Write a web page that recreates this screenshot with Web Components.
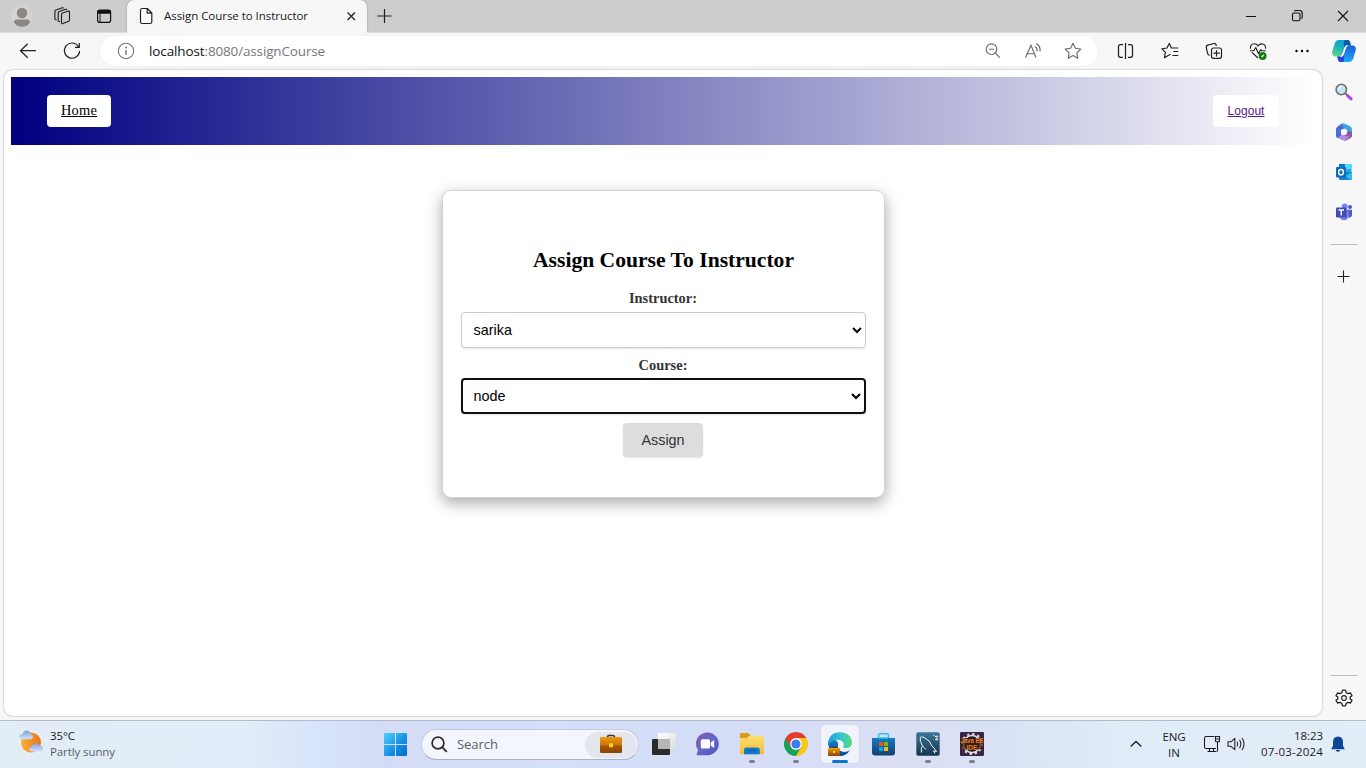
<!DOCTYPE html>
<html lang="en">
<head>
<meta charset="utf-8">
<title>Assign Course to Instructor</title>
<style>
html,body{margin:0;height:100%;overflow:hidden;background:#f7f7f7;font-family:"Open Sans","Noto Sans",sans-serif}
</style>
</head>
<body>
<desktop-screen></desktop-screen>
<script>
const ICONS = {
avatar:`<circle cx="12" cy="12" r="11" fill="#d5d3d0"/><circle cx="12" cy="9" r="5.200" fill="#8b8783"/><path d="M4 18.2Q4 15.5 6.5 15.5h11q2.500 0 2.500 2.700Q17.500 22.700 12 22.700T4 18.200Z" fill="#8b8783"/>`,
workspaces:`<g fill="none" stroke="#1b1b1b" stroke-width="1.100" stroke-linejoin="round"><path d="M11.500 10.500q0-1 1-1.400l6-2q1-.2 1 .8V16q0 .8-.8 1.200l-5.900 2.400q-1.300.4-1.300-1Z"/><path d="M10 17.500q-1.800.4-1.800-1.200V9q0-1 1-1.400l6.200-2.300q1.100-.3 1.400.8"/><path d="M6.700 15.700q-1.800.4-1.800-1.200V7.500q0-1 1-1.400l6.500-2.300q1-.3 1.300.5"/></g>`,
tabs:`<rect x="5.600" y="6.100" width="13" height="12.300" rx="2.200" fill="none" stroke="#111" stroke-width="1.200"/><path d="M5.600 9.800V8.100q0-2.200 2.200-2.200h8.600q2.200 0 2.200 2.200v1.700ZM8.500 9v9h-.9V9Z" fill="#111"/>`,
page:`<path d="M6.500 6.300q0-1.800 1.800-1.800h5l4.500 4.500v8.700q0 1.800-1.800 1.800H8.300q-1.800 0-1.800-1.800Zm6.700-1.700V9.200h4.600" fill="#fff" stroke="#222" stroke-width="1.200" stroke-linejoin="round"/>`,
x:`<path d="m8.500 8.500 7.500 7.500m0-7.500-7.500 7.500" stroke="#222" stroke-width="1.250"/>`,
plus:`<path d="M12.500 5v14M5.500 12h14" stroke="#222" stroke-width="1.200"/>`,
plusS:`<path d="M11.500 6.500v12M5.500 12.500h12" stroke="#222" stroke-width="1.100"/>`,
min:`<path d="M7 12.500h10" stroke="#111"/>`,
restore:`<g fill="none" stroke="#111" stroke-width="1.100"><rect x="7.500" y="9" width="7.500" height="7.800" rx="1.500"/><path d="M9.300 7.200q.3-.7 1.500-.7h3.700q2.700 0 2.700 2.700v3.800q0 1.200-.8 1.700"/></g>`,
close:`<path d="m7 7 10 10M17 7 7 17" stroke="#111" stroke-width="1.100"/>`,
back:`<path d="M20 11.700H4.500m7.200-7-7.200 7 7.200 7" fill="none" stroke="#222" stroke-width="1.200"/>`,
reload:`<path d="M18.600 7.800A7.600 7.600 0 1 0 19.600 12M19.300 4v4.300H15" fill="none" stroke="#222" stroke-width="1.200"/>`,
info:`<circle cx="12" cy="12" r="7.700" fill="none" stroke="#757575" stroke-width="1.100"/><path d="M12 11v5" stroke="#757575" stroke-width="1.400"/><circle cx="12" cy="8.500" r=".9" fill="#757575"/>`,
zoomout:`<g fill="none" stroke="#6b6b6b" stroke-width="1.150"><circle cx="10.500" cy="10.200" r="5.300"/><path d="m14.400 14.100 4.500 4.500M8 10.200h5"/></g>`,
read:`<g fill="none" stroke="#6b6b6b" stroke-width="1.150"><path d="M4.500 18.500 10 6.200l5 12.300M6.300 14.700h7.200M14 7.500q2.500 1.500 2 5M15.200 4.500q4.700 2.700 3.800 8"/></g>`,
star:`<path d="m12 4.300 2.400 4.900 5.400.8-3.900 3.800.9 5.400-4.800-2.600-4.800 2.600.9-5.400L4.200 10l5.400-.8Z" fill="none" stroke="#6b6b6b" stroke-width="1.150" stroke-linejoin="round"/>`,
split:`<g fill="none" stroke="#222" stroke-width="1.250"><path d="M9 5.700H6.500q-2 0-2 2v8.600q0 2 2 2H9M14 5.700h2.500q2 0 2 2v8.600q0 2-2 2H14M11.500 4v16"/></g>`,
favs:`<path d="M12.300 15.300 10.800 16 6.100 18.800l1-5.400L3.600 9.800l5-.8L11 4.500l2 4.500h7M15 12.500h5M14 16.500h6" transform="translate(.3 0)" fill="none" stroke="#222" stroke-width="1.200" stroke-linejoin="round"/>`,
collections:`<g fill="none" stroke="#222" stroke-width="1.200" stroke-linecap="round"><rect x="9.500" y="9" width="10" height="10.300" rx="2"/><path d="M14.500 11.500v5.500M11.800 14.200h5.500M7.300 16.200q-1.500-.5-1.800-2L4.300 8.700q-.4-2 1.500-2.500L12 4.500q1.700-.4 2.300 2"/></g>`,
health:`<g fill="none" stroke="#222" stroke-width="1.150" stroke-linejoin="round"><path d="M4.500 9.800q-.6-4.900 4-5 2 0 3.500 2 1.500-2 3.500-2 4.600.1 4 5M6 13.500l6 5.500M3.800 11.700h4l2-3.200 2.700 6.200 2.200-4.200 1 1.200h4"/></g><circle cx="16.600" cy="17" r="3.900" fill="#107c10"/><path d="m15.500 18.100 2.300-2.200" stroke="#bfe3bf" stroke-width="1.500"/>`,
dots:`<circle cx="6.500" cy="12" r="1.200"/><circle cx="12" cy="12" r="1.200"/><circle cx="17.500" cy="12" r="1.200"/>`,
copilot:`<defs><linearGradient id="c1" x1=".6" y1="0" x2=".3" y2="1"><stop offset="0" stop-color="#0a9fe0"/><stop offset=".5" stop-color="#20b2b5"/><stop offset="1" stop-color="#5fd48c"/></linearGradient><linearGradient id="c2" x1=".6" y1="0" x2=".3" y2="1"><stop offset="0" stop-color="#1a62dc"/><stop offset=".6" stop-color="#1f8df0"/><stop offset="1" stop-color="#12b8f4"/></linearGradient></defs><path d="M6.500 1h9q2 0 2.600 2.300l.8 3.200h-3.400q-1.800 0-2.500 2.200l-2.500 7.300q-.5 1.500-2 1.500H3.500Q-.3 17.500.2 12.500L3 3.700Q4 1 6.500 1Z" fill="url(#c1)"/><path d="M12.500 1h3q2 0 2.600 2.300l.8 3.200h-3.800q-1.800 0-2.500 2.200Q10.800 5 12.500 1Z" fill="#0d5b9f"/><path d="M17.500 23H8.700q-2 0-2.600-2.300l-.8-3.200h3.600q1.700 0 2.400-2.200l2.600-7.200q.6-1.600 2.100-1.600h4.500q3.800 0 3.300 4.500L21 20.300Q20 23 17.500 23Z" fill="url(#c2)"/><path d="M11.300 23H8.700q-2 0-2.600-2.300l-.8-3.200h3.600q1.700 0 2.400-2.200 1.900 3.700 0 7.700Z" fill="#2743d9"/><path d="M13 8.700q.7-2.200 2.500-2.200-1.200.2-1.700 1.700l-2.500 7.100q-.7 2.200-2.400 2.200H8.500q1.500 0 2-1.500Z" fill="#fff" stroke="#fff" stroke-width="1.100"/>`,
search:`<path d="m15.500 15.500 3.600 3.300" stroke="#b93fe8" stroke-width="3" stroke-linecap="round"/><path d="m13.200 13.300 1.800 1.700" stroke="#696969" stroke-width="1.800"/><circle cx="9.300" cy="9.500" r="5.200" fill="#c4e4f7" stroke="#717171" stroke-width="1.600"/><path d="M6.700 9q.5-2.300 2.700-2.500" stroke="#fff" stroke-width="1.200" fill="none"/>`,
m365:`<path d="M9.500 3.800q1.300-.8 2.700-.3l6.300 3.100q1.500.9 1.500 2.800v6.100l-5.200-1.800v-3.500L8 7.500Z" fill="#38a7e8"/><path d="m14.800 10.200 5.200 2v3.500q0 1.500-1.300 2.300l-5.500 3-3.200-5Z" fill="#8a58ad"/><path d="m4.500 16.500 5-1.500 2.500.8 6 .8-4.700 3.600q-1.300.7-2.600 0L5 17.700Z" fill="#b48ae0"/><path d="M9.500 3.800 5.300 6.700Q4 7.700 4 9.300V16q.3 1.500 1.500 1.900l4-2.600-.8-5L12 8.300Z" fill="#4c6bd6"/><path d="M9.500 10.300 12.500 8.500 15.500 10.500 14.500 14.500 11.500 15.500 9.300 13.800Z" fill="#f7f7f7"/>`,
outlook:`<rect x="7" y="4" width="12.500" height="12" rx="1" fill="#28a8ea"/><path d="M13 4h6.500v5H13Z" fill="#50d9ff"/><path d="M7 4h6v5H7Z" fill="#0078d4"/><path d="M7 12h13v7q0 1-1 1H8q-1 0-1-1Z" fill="#1683cf"/><path d="m20 12-7 4.200 6 3.800q1 0 1-1Z" fill="#31bced"/><rect x="4" y="7" width="10" height="10.500" rx="1" fill="#0f6cbd"/><ellipse cx="9" cy="12.200" rx="2.400" ry="2.700" fill="none" stroke="#fff" stroke-width="1.400"/>`,
teams:`<circle cx="12.700" cy="6.300" r="2.900" fill="#7b83eb"/><circle cx="18" cy="7" r="2" fill="#5059c9"/><path d="M15.500 9.800H20v5q-.2 3-3.500 3Z" fill="#5059c9"/><path d="M8 9.500h8.700v6.300q-.5 4.500-4.700 4.500-4 0-4.500-4Z" fill="#7b83eb"/><rect x="4" y="7.500" width="10.500" height="10" rx="1" fill="#444bb3"/><path d="M6.500 10h5.500M9.250 10v5.500" stroke="#fff" stroke-width="1.400"/>`,
gear:`<g transform="translate(12 12)"><path d="M-1.500-7.800h3l.8 2.500 1.600.9 2.500-.6 1.600 2.700L6.200-.9V.9L8 2.300 6.400 5l-2.500-.6-1.600.9-.8 2.500h-3l-.8-2.500-1.600-.9L-6.400 5-8 2.300-6.200.9V-.9L-8-2.300-6.400-5l2.500.6 1.600-.9Z" fill="none" stroke="#222" stroke-width="1.300" stroke-linejoin="round"/><circle r="2.300" fill="none" stroke="#222" stroke-width="1.200"/></g>`,
weather:`<defs><linearGradient id="w1"><stop stop-color="#f9b233"/><stop offset="1" stop-color="#ee7216"/></linearGradient><linearGradient id="w2" x2="0" y2="1"><stop stop-color="#7f9fdc"/><stop offset="1" stop-color="#d2e1fa"/></linearGradient></defs><circle cx="12" cy="12.500" r="10" fill="url(#w1)"/><path d="M3.500 9.200Q0 9 .2 6.500T3.500 4Q4.500.5 7.500.5t4 3.200Q14 4.500 14 6.700t-2.500 2.500Z" fill="url(#w2)"/><path d="M12.500 21.500Q10 21.300 10 19T13 16.500q1-3.500 3.700-3.500 3 0 3.800 2.800 3.500.3 3.500 3T20.500 21.500Z" fill="url(#w2)"/>`,
windows:`<defs><linearGradient id="win" x1="0" y1="0" x2="24" y2="24" gradientUnits="userSpaceOnUse"><stop stop-color="#4fd0fb"/><stop offset=".6" stop-color="#118be0"/><stop offset="1" stop-color="#0067c5"/></linearGradient></defs><path d="M1 0H11V11H0V1q0-1 1-1ZM12 0h10q1 0 1 1v10H12ZM0 12h11v11H1q-1 0-1-1ZM12 12h11v10q0 1-1 1H12Z" fill="url(#win)"/>`,
mag:`<circle cx="11" cy="11" r="5.900" fill="none" stroke="#2c2c2c" stroke-width="1.700"/><path d="m15.300 15.300 4 4" stroke="#2c2c2c" stroke-width="1.900" stroke-linecap="round"/>`,
brief:`<defs><linearGradient id="bf" x2="0" y2="1"><stop stop-color="#ef9608"/><stop offset=".5" stop-color="#c9760a"/><stop offset=".55" stop-color="#a95808"/><stop offset="1" stop-color="#8b4208"/></linearGradient></defs><path d="M8.500 5.500Q8.500 3.500 10 3.500h4q1.500 0 1.500 2" fill="none" stroke="#3b3328" stroke-width="1.600"/><rect x="1" y="5" width="22" height="16" rx="1.200" fill="url(#bf)"/><rect x="10" y="11.200" width="4" height="4" rx=".5" fill="#ffd51e"/>`,
taskview:`<defs><linearGradient id="tv" x1="0" y1="0" x2="1" y2="1"><stop stop-color="#fff"/><stop offset="1" stop-color="#dcdcdc"/></linearGradient></defs><rect y="7" width="18" height="16" rx="1" fill="#2b2b29"/><rect x="6" y="1" width="17.800" height="16" rx="1" fill="url(#tv)"/><path d="M6 7h12v10H7q-1 0-1-1Z" fill="#b6b6b6"/>`,
chat:`<defs><linearGradient id="ch" x1="0" y1="0" x2="1" y2="1"><stop stop-color="#8658a9"/><stop offset=".5" stop-color="#6368c9"/><stop offset="1" stop-color="#5253c4"/></linearGradient></defs><path d="M0 12A11.400 11.400 0 1 1 11.500 23.200H1.500q-1.200 0-.8-1.300l1.300-3.800Q0 15.500 0 12Z" fill="url(#ch)"/><rect x="4.800" y="7.300" width="9.200" height="9.300" rx="1.500" fill="#fff"/><path d="m14.700 10.500 3.500-2.500v8l-3.500-2.400Z" fill="#fff"/>`,
folder:`<defs><linearGradient id="fo" x2="0" y2="1"><stop stop-color="#ffdf72"/><stop offset="1" stop-color="#f5bd31"/></linearGradient></defs><path d="M0 2.200Q0 1 1.200 1h7l3 3.200H9L7 6H0Z" fill="#d79e12"/><path d="M0 6h7l3-2.200h12.500q1.500 0 1.500 1.500V21q0 1.200-1.200 1.200H1.200Q0 22.200 0 21Z" fill="url(#fo)"/><path d="M4 22.200V18q0-2.500 2.500-2.500h10.800q2.500 0 2.500 2.500v4.200Z" fill="#1279cb"/><path d="M8 18.500h8" stroke="#0a5ba1" stroke-width="1.500"/>`,
chrome:`<path d="M12 12V6H22.400A12 12 0 0 1 12 24Z" fill="#fdc717"/><path d="M12 12 1.600 6A12 12 0 0 0 12 24l5.200-9Z" fill="#18a05b"/><path d="M12 6H22.400A12 12 0 0 0 1.600 6l5.200 9Z" fill="#e33b2e"/><circle cx="12" cy="12" r="5.900" fill="#fff"/><circle cx="12" cy="12" r="4.600" fill="#3c7df1"/>`,
edge:`<defs><linearGradient id="e1"><stop stop-color="#1d9ddd"/><stop offset=".5" stop-color="#32c5d4"/><stop offset="1" stop-color="#5bd87a"/></linearGradient><linearGradient id="e2" x2="0" y2="1"><stop stop-color="#167fc8"/><stop offset="1" stop-color="#0b4a9d"/></linearGradient><linearGradient id="ebf" x2="0" y2="1"><stop stop-color="#f2a00c"/><stop offset="1" stop-color="#8e4308"/></linearGradient></defs><path d="M0 12Q0 6 6 7.500q5 1.500 4 6-.5 5 4.500 6 4 .7 7.500-1.500Q18.500 24 12 24 2 23.500 0 12Z" fill="url(#e2)"/><path d="M0 12Q.8.500 12 .2 23.500.8 24 11q-.3 5-5.800 5.200-4.200 0-3.200-2 1.500-3-1.500-5.400Q8 5.500 0 12Z" fill="url(#e1)"/><path d="M10 13.500Q10 9.800 13 9.800t2.500 3.700q-1.300 2.800 2.700 2.700 3.500 0 5-2-.3 2-1.200 3.800-3.500 2.200-7.500 1.500-4.500-1-4.500-6Z" fill="#eff3fb"/><path d="M4 16.500v-1.300h4v1.300" fill="none" stroke="#4a3010"/><rect y="16" width="12" height="8" rx=".8" fill="url(#ebf)"/><rect x="5" y="19" width="2" height="2" fill="#ffdb32"/>`,
store:`<defs><linearGradient id="st" x2="0" y2="1"><stop stop-color="#147bc2"/><stop offset="1" stop-color="#173e72"/></linearGradient></defs><path d="M6.500 7V3.200Q6.500 1.700 8 1.700h7q1.500 0 1.500 1.500V7" fill="none" stroke="#2fc1ef" stroke-width="1.600"/><path d="M0 6h23v14.500q0 3-3 3H3q-3 0-3-3Z" fill="url(#st)"/><path d="M6.500 6h10" stroke="#2fc1ef" stroke-width="1.600"/><path d="M7 10h4v4H7Z" fill="#f25022"/><path d="M12 10h4v4h-4Z" fill="#7fba00"/><path d="M7 15h4v4H7Z" fill="#00a4ef"/><path d="M12 15h4v4h-4Z" fill="#ffb900"/>`,
mysql:`<defs><linearGradient id="my" x2="0" y2="1"><stop stop-color="#3c7594"/><stop offset="1" stop-color="#153550"/></linearGradient></defs><rect x=".3" y=".3" width="23.400" height="23.400" rx="2" fill="url(#my)"/><path d="M5.500 20.500Q4.500 16 6.500 14 3.500 9 4.200 5.500 5 4 8 5.500q6 2.500 8 8.500 2 1.500 4.500 5.500l-3-.5 1.500 2.500M6.500 14q1.500 1 3.300 3.500M17 2.500l2 2 3-.5-1.500 2 1.500 2-3-.7" fill="none" stroke="#e9f3f8" stroke-width="1"/>`,
ide:`<rect width="24" height="24" rx="1" fill="#3c2647"/><circle cx="12" cy="12" r="8.500" fill="#211b23" stroke="#ebe4e3" stroke-width="1.700"/><circle cx="12" cy="12" r="10" fill="none" stroke="#ebe4e3" stroke-width="2" stroke-dasharray="2.300 2.930"/><rect y="6" width="24" height="11.500" fill="#3b2018" opacity=".75"/><g font-family="Liberation Sans,sans-serif" font-weight="700" fill="#f07b22"><text x=".4" y="11.200" font-size="7.500" textLength="23.200" lengthAdjust="spacingAndGlyphs">Java EE</text><text x="6.500" y="17.700" font-size="7.500" textLength="11" lengthAdjust="spacingAndGlyphs">IDE</text></g>`,
chevron:`<path d="m6.700 14.500 5.300-5 5.300 5" fill="none" stroke="#222" stroke-width="1.400"/>`,
monitor:`<g fill="none" stroke="#1e1e1e" stroke-width="1.100"><path d="M14.500 4.500H6.300q-1.800 0-1.800 1.800v8.400q0 1.800 1.800 1.800h9.700M7.500 19.500h9M9.500 16.500v3M13.500 16.500v3"/><path d="M15.500 4.500h4v4.300q0 1-1 1h-2q-1 0-1-1ZM15.500 7h4M17.500 10v9.500"/></g>`,
speaker:`<path d="M4 9.800h3l3.800-3.500v11.400L7 14.300H4ZM13 9.500q1.400 2.500 0 5M15.500 7.700q2.700 4.300 0 8.600M18 6q4 6 0 12" fill="none" stroke="#1e1e1e" stroke-width="1.050" stroke-linejoin="round"/>`,
bell:`<path d="M12 4.500q-5 .2-5 5.500v3.700L5.500 16.500v.8h13v-.8L17 13.700V10q0-5.300-5-5.500ZM9.700 18h4.600q-.4 1.700-2.300 1.700T9.700 18Z" fill="#0a469a"/>`
};

const define = (tag, css, html, after) => customElements.define(tag, class extends HTMLElement {
  connectedCallback() {
    if (this.shadowRoot) return;
    this.attachShadow({mode: 'open'}).innerHTML = `<style>*{box-sizing:border-box}${css}</style>${typeof html === 'function' ? html(this) : html}`;
    if (after) after(this);
  }
});

define('ui-icon', `:host{display:block;flex:none;width:24px;height:24px}svg{display:block;width:100%;height:100%;overflow:visible}`,
  el => `<svg viewBox="0 0 24 24">${ICONS[el.getAttribute('name')]}</svg>`);

/* A single line of text tracked so that it fills the width given in "w". */
define('fit-text', `:host{display:block;flex:none;white-space:nowrap}span{display:inline-block;text-decoration:inherit}`, `<span><slot></slot></span>`, el => {
  const span = el.shadowRoot.querySelector('span'), w = parseFloat(el.getAttribute('w'));
  const n = el.textContent.length, now = span.getBoundingClientRect().width;
  span.style.letterSpacing = (w - now) / n + 'px';
});

define('tab-strip', `
:host{display:flex;align-items:center;height:32px;background:#cdcdcd;padding:0 11px 0 10px;flex:none}
.left{display:flex;gap:16px}.left :last-child{margin-left:2px}
.tab{display:flex;align-items:center;width:240px;height:32px;margin-left:11px;background:#f7f7f7;border-radius:7px 7px 0 0;padding:0 4px 0 7px;box-shadow:0 0 2px #0005;clip-path:inset(0 -3px)}
.tab fit-text{margin:-2px 0 0 6px;font-size:11.500px;color:#1a1a1a}
.tab ui-icon:last-child{margin-left:auto}
.plus{margin-left:5px}.win{display:flex;gap:22px;margin-left:auto}`,
`<div class="left"><ui-icon name="avatar"></ui-icon><ui-icon name="workspaces"></ui-icon><ui-icon name="tabs"></ui-icon></div>
<div class="tab"><ui-icon name="page"></ui-icon><fit-text w="144">Assign Course to Instructor</fit-text><ui-icon name="x"></ui-icon></div>
<ui-icon class="plus" name="plus"></ui-icon>
<div class="win"><ui-icon name="min"></ui-icon><ui-icon name="restore"></ui-icon><ui-icon name="close"></ui-icon></div>`);

define('tool-bar', `
:host{display:flex;align-items:center;height:37px;flex:none;padding:0 10px 0 16px;background:linear-gradient(90deg,#dedede 127px,#f7f7f7 127px,#f7f7f7 367px,#dedede 367px) 0 0/100% 1px no-repeat #f7f7f7}
.nav{display:flex;gap:20px}
.addr{display:flex;align-items:center;flex:1;height:30px;margin:1px 16px 0 16px;border-radius:15px;background:#fff;padding:0 13px 0 14px;box-shadow:0 0 3px #0000000d}
.url{display:flex;margin:0 0 0 11px;font-size:13.500px;color:#777}
.acts{display:flex;gap:16px;margin-left:auto}.ext{display:flex;gap:20px}.ext :last-child{margin-left:-2px}`,
`<div class="nav"><ui-icon name="back"></ui-icon><ui-icon name="reload"></ui-icon></div>
<div class="addr"><ui-icon name="info"></ui-icon><div class="url"><fit-text w="55.500" style="color:#111">localhost</fit-text><fit-text w="120.500">:8080/assignCourse</fit-text></div>
<div class="acts"><ui-icon name="zoomout"></ui-icon><ui-icon name="read"></ui-icon><ui-icon name="star"></ui-icon></div></div>
<div class="ext"><ui-icon name="split"></ui-icon><ui-icon name="favs"></ui-icon><ui-icon name="collections"></ui-icon><ui-icon name="health"></ui-icon><ui-icon name="dots"></ui-icon><ui-icon name="copilot"></ui-icon></div>`);

define('side-bar', `
:host{display:flex;flex-direction:column;align-items:center;width:44px;flex:none;padding:11px 0 10px}
.apps{display:grid;gap:16px}hr{width:28px;height:1px;border:0;background:#bdbdbd;margin:20px 0 19px}
hr.low{margin:auto 0 10px}`,
`<div class="apps"><ui-icon name="search"></ui-icon><ui-icon name="m365"></ui-icon><ui-icon name="outlook"></ui-icon><ui-icon name="teams"></ui-icon></div>
<hr><ui-icon name="plusS"></ui-icon><hr class="low"><ui-icon name="gear"></ui-icon>`);

define('nav-header', `
:host{display:flex;justify-content:space-between;align-items:center;height:68px;padding:0 37px 0 36px;background:linear-gradient(to right,navy,#fff)}
a{display:flex;align-items:center;justify-content:center;height:32px;border-radius:4px;background:#fff;text-decoration:underline}
fit-text{text-decoration:inherit;margin-top:-2px}
.home{width:64px;color:#000;font:14.400px "Liberation Serif",serif}
.out{width:66px;color:#551a8b;font:12px "Liberation Sans",sans-serif}
.out fit-text{margin-top:-1px}`,
`<a class="home"><fit-text w="36">Home</fit-text></a><a class="out"><fit-text w="37">Logout</fit-text></a>`);

define('select-field', `
:host{display:block}
label{display:flex;justify-content:center;height:16px;padding-right:1px;font:bold 14.400px/16px "Liberation Serif",serif;color:#333}
select{display:block;width:100%;height:36px;margin-top:var(--gap,6px);padding:0 0 0 7.500px;border:1px solid #ccc;border-radius:4px;background:#fff;color:#000;font:14.400px "Liberation Sans",sans-serif;box-shadow:0 1px 2px #0000001a;outline:0}
:host([active]) select{border:2px solid #101010;padding-left:6.500px;padding-right:0}`,
el => `<label><fit-text w="${el.getAttribute('w')}">${el.getAttribute('label')}</fit-text></label><select><option>${el.getAttribute('value')}</option></select>`);

define('assign-card', `
:host{display:flex;flex-direction:column;box-sizing:border-box;width:443px;height:308px;margin:45px auto 0;padding:57px 18px 0;border:1px solid #d4d4d4;border-radius:9px;background:#fff;box-shadow:0 5px 15px rgba(0,0,0,.35)}
h2{display:flex;justify-content:center;margin:0 0 18px;font:bold 21.600px/24px "Liberation Serif",serif;color:#000}
.two{--gap:5px;margin-top:9px}
button{align-self:center;width:80px;height:34px;margin:9px 1px 0 0;padding:0;border:0;border-radius:4px;background:#ddd;color:#333;font:14.400px "Liberation Sans",sans-serif;box-shadow:0 1px 2px #0000001a}`,
`<h2><fit-text w="261">Assign Course To Instructor</fit-text></h2>
<select-field label="Instructor:" value="sarika" w="68"></select-field>
<select-field class="two" label="Course:" value="node" w="49" active></select-field>
<button>Assign</button>`);

define('web-view', `:host{display:block;flex:1;margin:1px 0 4px 4px;padding:7px 6px 0 7px;background:#fff;border-radius:9px;box-shadow:0 0 2px #0006}`,
`<nav-header></nav-header><assign-card></assign-card>`);

define('task-item', `
:host{display:flex;flex-direction:column;align-items:center;box-sizing:border-box;width:38px;height:38px;padding-top:7px;border-radius:4px;flex:none}
i{width:6px;height:3px;border-radius:2px;background:#7c8088;margin-top:4px;display:none}
:host([open]) i{display:block}
:host([active]){background:#f0f3fc;box-shadow:0 0 1px #0003}
:host([active]) i{display:block;width:16px;background:#0b76d1}`,
el => `<ui-icon name="${el.getAttribute('name')}"></ui-icon><i></i>`);

define('task-bar', `
:host{display:flex;box-sizing:border-box;height:48px;flex:none;border-top:1px solid #b3bccb;padding:0 16px 0 19px;color:#1b1b1b;font-size:11.500px;line-height:16px;
background:linear-gradient(90deg,#e2edf6 0,#e1edf8 18%,#d6e3fa 24%,#d4dbf5 28%,#d4dff9 40%,#d5ddf6 55%,#dadff3 66%,#d9e3f5 74%,#e0ecf8 82%,#e2edf7 100%)}
.wx{display:flex;width:365px;padding-top:7px;gap:7px}.wx ui-icon{margin-top:2px}
.wx .sub{color:#5a6068}
.start{margin-top:12px}
.search{display:flex;align-items:center;width:218px;height:31px;margin:8px 9px 0 13px;border-radius:16px;background:#f3f6fd;border:1px solid #c3cbdf;border-bottom-color:#a9b1c5;padding:0 1px 0 5px;font-size:13px;color:#5d6067}
.search fit-text{margin:-2px 0 0 6px}.search>ui-icon{margin-top:-1px}
.pill{display:flex;align-items:center;justify-content:center;width:52px;height:26px;border-radius:13px;background:#e3e7ed;margin-left:auto}
.pill ui-icon{margin-top:-1px}
.apps{display:flex;gap:6px;padding-top:4px;margin-left:-3px}
.tray{display:flex;margin-left:auto}
.tray ui-icon{margin-top:11px}
.lang,.clock{padding-top:8px;display:grid;align-content:start}
.lang{justify-items:center;width:24px;margin:0 14px}.clock{justify-items:end;width:63px;margin-left:12px;padding-top:7px}`,
`<div class="wx"><ui-icon name="weather"></ui-icon><div><fit-text w="25">35°C</fit-text><fit-text class="sub" w="65">Partly sunny</fit-text></div></div>
<ui-icon class="start" name="windows"></ui-icon>
<div class="search"><ui-icon name="mag"></ui-icon><fit-text w="41">Search</fit-text><div class="pill"><ui-icon name="brief"></ui-icon></div></div>
<div class="apps"><task-item name="taskview"></task-item><task-item name="chat"></task-item><task-item name="folder" open></task-item><task-item name="chrome" open></task-item><task-item name="edge" active></task-item><task-item name="store"></task-item><task-item name="mysql" open></task-item><task-item name="ide" open></task-item></div>
<div class="tray"><ui-icon name="chevron"></ui-icon><div class="lang"><fit-text w="23">ENG</fit-text><fit-text w="12">IN</fit-text></div>
<ui-icon name="monitor"></ui-icon><ui-icon name="speaker"></ui-icon>
<div class="clock"><fit-text w="29">18:23</fit-text><fit-text w="62">07-03-2024</fit-text></div><ui-icon style="margin-left:3px" name="bell"></ui-icon></div>`);

define('desktop-screen', `
:host{display:flex;flex-direction:column;width:1366px;height:768px;background:#f7f7f7}
.mid{display:flex;flex:1;min-height:0}`,
`<tab-strip></tab-strip><tool-bar></tool-bar><div class="mid"><web-view></web-view><side-bar></side-bar></div><task-bar></task-bar>`);
</script>
</body>
</html>
